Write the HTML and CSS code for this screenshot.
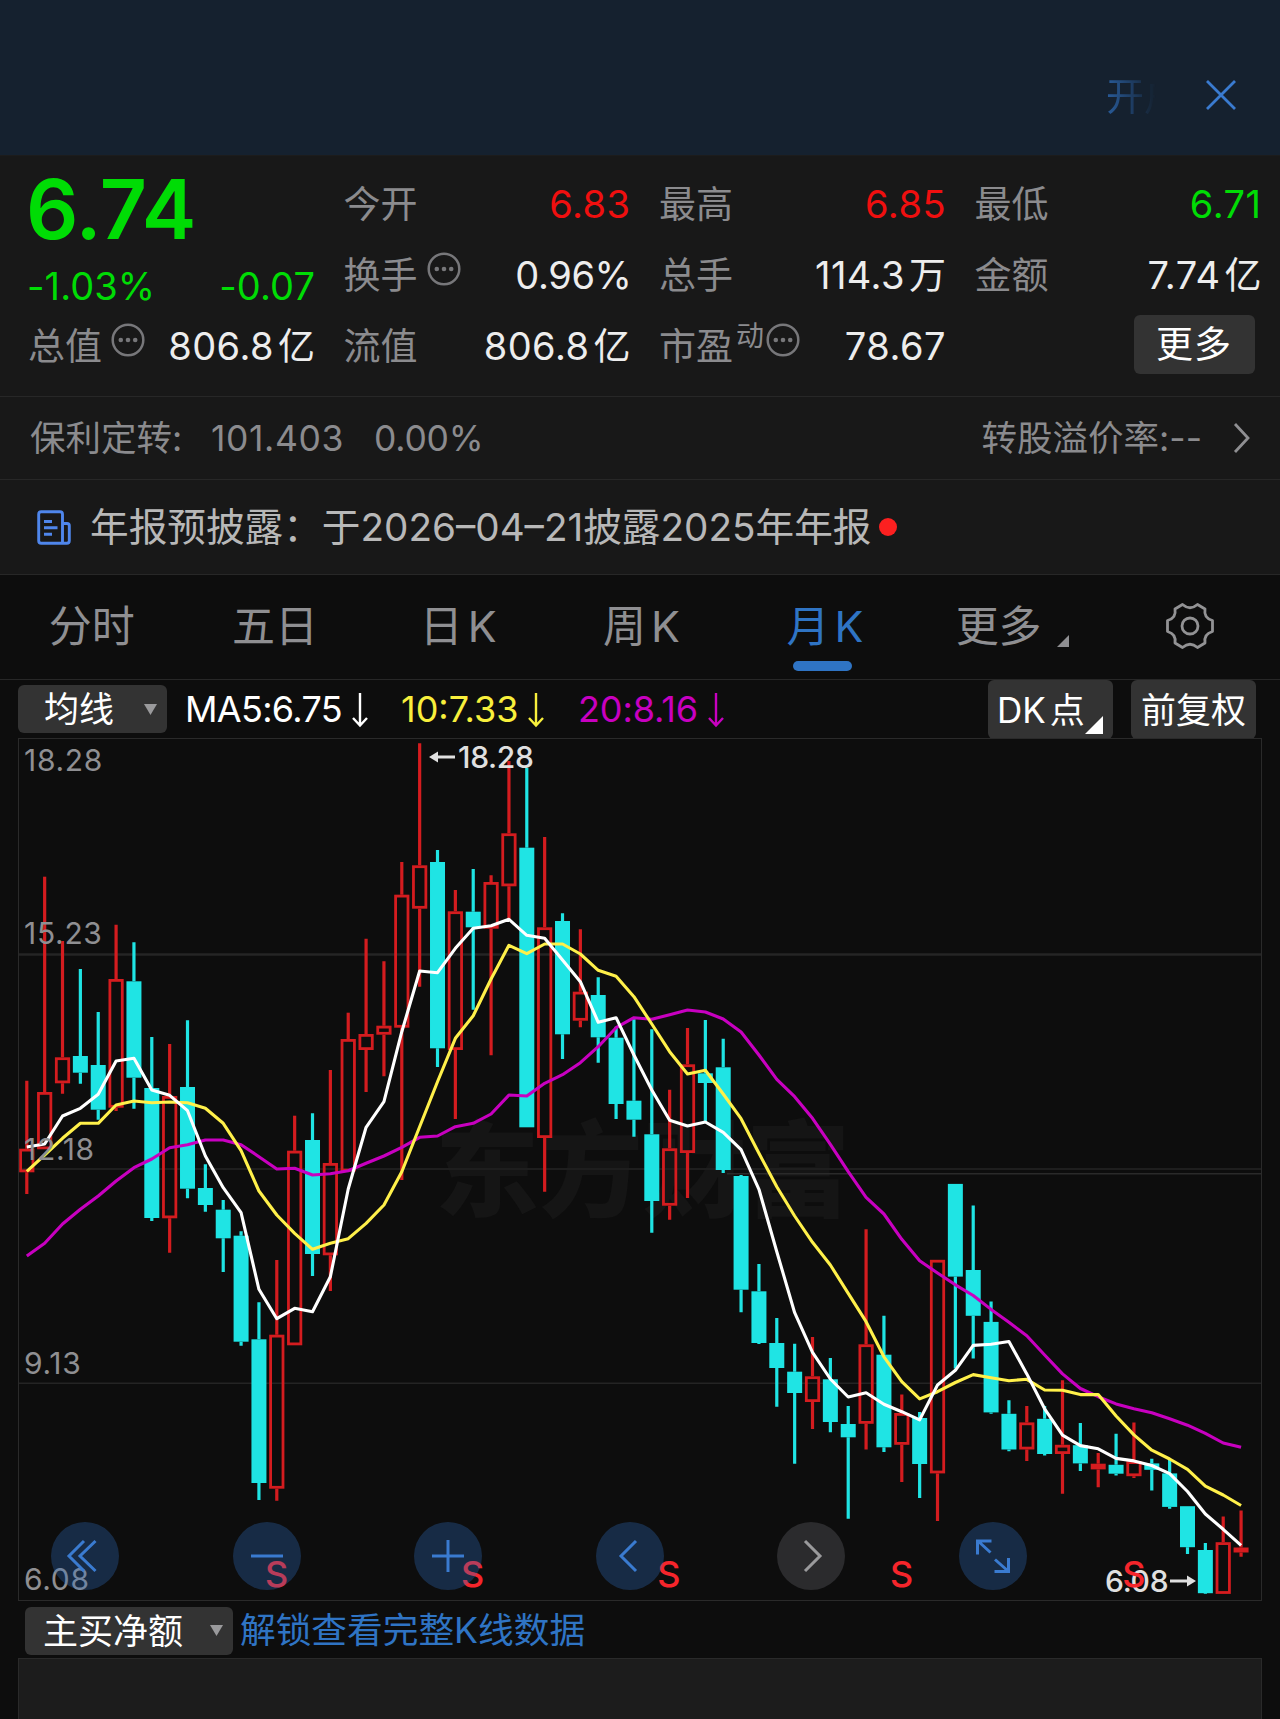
FILE: index.html
```html
<!DOCTYPE html>
<html lang="zh-CN">
<head>
<meta charset="utf-8">
<title>月K</title>
<link rel="stylesheet" href="styles.css">
</head>
<body>
<svg class="defs" width="0" height="0">
  <symbol id="info" viewBox="0 0 34 34"><circle cx="17" cy="17" r="15.3" fill="none" stroke="currentColor" stroke-width="2.5"/><circle cx="9.8" cy="17" r="2.3" fill="currentColor"/><circle cx="17" cy="17" r="2.3" fill="currentColor"/><circle cx="24.2" cy="17" r="2.3" fill="currentColor"/></symbol>
  <symbol id="down" viewBox="0 0 16 36"><path d="M8 1v32M1 26l7 7.5 7-7.5" fill="none" stroke="currentColor" stroke-width="2.4"/></symbol>
</svg>
<header class="banner">
  <div class="marquee">开户</div>
  <svg class="close" width="32" height="32" viewBox="0 0 32 32"><path d="M2 2l28 28M30 2L2 30" stroke="#3a7bd0" stroke-width="2.8" fill="none"/></svg>
</header>

<section class="quote">
  <div class="col col-main">
    <div class="price">6.74</div>
    <div class="row change"><span>-1.03%</span><span>-0.07</span></div>
    <div class="row"><span class="label">总值<svg class="info"><use href="#info"/></svg></span><span class="val">806.8<i>亿</i></span></div>
  </div>
  <div class="col">
    <div class="row"><span class="label">今开</span><span class="val up">6.83</span></div>
    <div class="row"><span class="label">换手<svg class="info"><use href="#info"/></svg></span><span class="val pct">0.96%</span></div>
    <div class="row"><span class="label">流值</span><span class="val">806.8<i>亿</i></span></div>
  </div>
  <div class="col">
    <div class="row"><span class="label">最高</span><span class="val up">6.85</span></div>
    <div class="row"><span class="label">总手</span><span class="val">114.3<i>万</i></span></div>
    <div class="row"><span class="label">市盈<sup>动</sup><svg class="info info-tight"><use href="#info"/></svg></span><span class="val">78.67</span></div>
  </div>
  <div class="col">
    <div class="row"><span class="label">最低</span><span class="val down">6.71</span></div>
    <div class="row"><span class="label">金额</span><span class="val">7.74<i>亿</i></span></div>
    <div class="row row-more"><button class="more">更多</button></div>
  </div>
</section>

<section class="bond">
  <span class="bond-name">保利定转:</span><span class="bond-price">101.403</span><span class="bond-pct">0.00%</span>
  <span class="bond-rate">转股溢价率:--</span>
  <svg width="18" height="32" viewBox="0 0 18 32"><path d="M2 2l13 14L2 30" fill="none" stroke="#8f8f92" stroke-width="2.8"/></svg>
</section>

<section class="notice">
  <svg width="34" height="35" viewBox="0 0 34 35" fill="none" stroke="#4f86ec" stroke-width="2.9"><path d="M25.5 33.3H4.2a2.5 2.5 0 0 1-2.5-2.5V4.2a2.5 2.5 0 0 1 2.5-2.5H23a2.5 2.5 0 0 1 2.5 2.5zM25.500 13.500h4.500a2.300 2.300 0 0 1 2.300 2.300v15a2.500 2.500 0 0 1-2.500 2.500h-4.300M7 11.500h8M7 17.800h13.500M7 24.200h8"/></svg>
  <span class="notice-text">年报预披露：于2026–04–21披露2025年年报</span><b class="dot"></b>
</section>

<nav class="tabs">
  <a>分时</a><a>五日</a><a>日<em>K</em></a><a>周<em>K</em></a><a class="active">月<em>K</em></a><a class="tab-more">更多<svg width="12" height="12"><path d="M12 0v12H0z" fill="#8f8f92"/></svg></a>
  <a class="tab-gear"><svg width="50" height="50" viewBox="-25 -25 50 50" fill="none" stroke="#929294" stroke-width="2.8" stroke-linejoin="round"><circle r="8"/><path d="M-7.500 -21.500Q0 -15 7.500 -21.500L15 -17Q13.500 -8 22.500 -5.500V5.500Q13.500 8 15 17L7.500 21.500Q0 15 -7.500 21.500L-15 17Q-13.500 8 -22.500 5.500V-5.500Q-13.500 -8 -15 -17Z"/></svg></a>
</nav>

<section class="ma">
  <button class="select select-ma"><span>均线</span><svg width="13" height="11"><path d="M0 0h13L6.500 11z" fill="#9a9a9c"/></svg></button>
  <span class="ma5">MA5:6.75<svg class="arr"><use href="#down"/></svg></span>
  <span class="ma10">10:7.33<svg class="arr"><use href="#down"/></svg></span>
  <span class="ma20">20:8.16<svg class="arr"><use href="#down"/></svg></span>
  <button class="opt opt-dk"><span>DK</span><span>点</span><svg width="18" height="18"><path d="M18 0v18H0z" fill="#fff"/></svg></button>
  <button class="opt opt-fq">前复权</button>
</section>

<section class="chart">
  <svg class="kline" id="kline" viewBox="0 738 1280 863" width="1280" height="863">
    <rect x="18.500" y="738.500" width="1243" height="862" fill="none" stroke="#2a2a2a"/>
    <text class="watermark" x="435" y="1209" textLength="415">东方财富</text>
    <path d="M19 954.500H1261" stroke="#252525" stroke-width="2.500"/>
    <path d="M19 1169H1261" stroke="#1e1e1e" stroke-width="2"/>
    <path d="M727 1173.700H1261" stroke="#2a2a2a" stroke-width="1.500"/>
    <path d="M19 1383.300H1261" stroke="#242424" stroke-width="1.500"/>
    <g id="candles"></g>
    <g id="averages" fill="none" stroke-width="3.100" stroke-linejoin="round"></g>
    <g class="axis">
      <text x="24" y="771">18.28</text><text x="24" y="944">15.23</text><text x="24" y="1159.500">12.18</text><text x="24" y="1374">9.13</text><text x="24" y="1589.500">6.08</text>
    </g>
    <g class="extreme">
      <text x="458" y="767.500">18.28</text>
      <text x="1105" y="1592">6.08</text>
      <path d="M436 757H455M1170 1581H1190" stroke="#e0e0e0" stroke-width="2.800"/>
      <path d="M429 757l9-5.500v11zM1196 1581l-9-5.500v11z"/>
    </g>
    <g class="sell"><text x="276.700" y="1586.500">S</text><text x="472.700" y="1586.500">S</text><text x="669" y="1586.500">S</text><text x="901.700" y="1586.500">S</text><text x="1134" y="1586.500">S</text></g>
  </svg>
  <div class="controls">
    <button><svg viewBox="-34 -34 68 68"><path d="M-1 -15L-16 0L-1 15M10.500 -15L-5 0L10.500 15"/></svg></button>
    <button><svg viewBox="-34 -34 68 68"><path d="M-16 0H16"/></svg></button>
    <button><svg viewBox="-34 -34 68 68"><path d="M-16 0H16M0 -16V16"/></svg></button>
    <button><svg viewBox="-34 -34 68 68"><path d="M6 -15L-9 0L6 15"/></svg></button>
    <button class="off"><svg viewBox="-34 -34 68 68"><path d="M-6 -15L9 0L-6 15"/></svg></button>
    <button><svg viewBox="-34 -34 68 68"><path d="M-2.500 -3.500L-15 -15M-15.500 -1.500V-15H-1.500M2 3.500L15 15M15.500 2V15.500H1.500"/></svg></button>
  </div>
</section>

<section class="sub">
  <button class="select select-sub"><span>主买净额</span><svg width="13" height="11"><path d="M0 0h13L6.500 11z" fill="#9a9a9c"/></svg></button>
  <a class="unlock">解锁查看完整K线数据</a>
</section>
<div class="panel"></div>
<script src="chart.js"></script>
</body>
</html>
```
FILE: styles.css
```css
* { box-sizing: border-box; }
body {
  margin: 0; width: 1280px; height: 1719px; overflow: hidden;
  display: flex; flex-direction: column;
  background: #0d0d0d; color: #ededed;
  font-family: Inter, "Noto Sans CJK SC", sans-serif;
  line-height: 1.2;
}
button { border: 0; margin: 0; padding: 0; font: inherit; color: #fff; background: #333; }
i, em { font-style: normal; }
svg { display: block; flex: none; }
.defs { position: absolute; }

.banner {
  flex: none; height: 155px; background: #15212f;
  display: flex; justify-content: flex-end; align-items: flex-start;
  padding: 79px 43px 0 0;
}
.marquee {
  width: 54px; height: 46px; margin: -6px 45px 0 0; overflow: hidden; white-space: nowrap;
  font-size: 38px; line-height: 46px; color: #2c66ad;
  -webkit-mask-image: linear-gradient(90deg, rgba(0,0,0,.85), transparent 92%);
  mask-image: linear-gradient(90deg, rgba(0,0,0,.85), transparent 92%);
}

.quote {
  flex: none; height: 241px; background: #181818; border-top: 1px solid #1c1c1c;
  display: grid; grid-template-columns: repeat(4, 287px); column-gap: 28.500px;
  padding: 13px 0 0 28px;
}
.row { height: 71px; display: flex; justify-content: space-between; align-items: center; font-size: 38px; white-space: nowrap; }
.label { display: flex; align-items: center; color: #8b8b8e; font-size: 37px; padding-top: 2px; }
.val { letter-spacing: .5px; }
.pct { letter-spacing: -.4px; margin-right: -1px; }
.val i { margin-left: 4px; font-size: 37px; letter-spacing: 0; }
.up { color: #f00f0f; }
.down, .price, .change { color: #00dc05; }
.price { height: 86px; margin-left: -2px; font-size: 82px; font-weight: 600; line-height: 81px; letter-spacing: -.3px; }
.change { height: 56px; padding-top: 7px; letter-spacing: .1px; margin-left: -1px; }
.info { width: 34px; height: 34px; margin: -15px 0 0 9px; color: #77777a; }
.info-tight { margin-left: 2px; }
.label sup { font-size: 28px; line-height: 28px; margin: -22px 0 0 3px; }
.row-more { justify-content: flex-end; }
.more { width: 121px; height: 59px; margin: -4px 7px 0 0; padding-top: 2px; border-radius: 6px; font-size: 37px; letter-spacing: 1px; }

.bond {
  flex: none; height: 83px; background: #181818; border-top: 1px solid #272727;
  display: flex; align-items: center; padding: 0 29px 0 30px;
  font-size: 35.500px; color: #8b8b8e;
}
.bond span { padding-top: 2px; }
.bond-name { width: 181px; }
.bond-price { width: 163px; letter-spacing: .6px; }
.bond-pct { letter-spacing: -.2px; }
.bond-rate { margin-left: auto; margin-right: 31px; }

.notice {
  flex: none; height: 95px; background: #181818; border-top: 1px solid #272727;
  display: flex; align-items: center; padding-left: 37px;
  font-size: 38.650px; color: #b8b8b8; white-space: nowrap;
}
.notice-text { margin-left: 19px; }
.dot { width: 18px; height: 18px; margin-left: 8px; border-radius: 50%; background: #fc2020; }

.tabs {
  flex: none; height: 105px; border-top: 1px solid #272727;
  display: grid; grid-template-columns: repeat(7, 183.300px);
  font-size: 43px; line-height: 102px; color: #8f8f92; white-space: nowrap; text-align: center;
}
.tabs a { position: relative; height: 104px; }
.tabs em { margin-left: 5px; }
.active { color: #2f74c4; }
.active::after { content: ""; position: absolute; left: 60px; bottom: 8px; width: 59px; height: 10px; border-radius: 5px; background: #2f74c4; }
.tab-more svg { display: inline-block; margin-left: 15px; vertical-align: -5px; }
.tab-more { left: 4px; }
.tab-gear { display: flex; justify-content: center; padding: 26px 2px 0 0; }

.ma {
  flex: none; height: 59px; border-top: 1px solid #272727;
  display: flex; align-items: center; padding-left: 18px;
  font-size: 36px; white-space: nowrap;
}
.select { display: flex; align-items: center; justify-content: space-between; height: 48px; border-radius: 6px; }
.select-ma { width: 149px; padding: 0 10px 0 26px; font-size: 35px; }
.ma > span { display: flex; align-items: center; padding-top: 1px; }
.arr { width: 16px; height: 36px; margin-left: 10px; }
.ma5 { margin-left: 18px; color: #fff; width: 216px; letter-spacing: -.7px; }
.ma10 { color: #f8ef3c; width: 177px; }
.ma20 { color: #c800c0; letter-spacing: -.1px; }
.opt { height: 59px; border-radius: 6px; display: flex; align-items: center; font-size: 35px; padding-top: 1px; }
.opt-dk { width: 125px; margin-left: auto; padding-left: 9px; gap: 4px; }
.opt-dk svg { align-self: flex-end; margin: 0 0 5px -4px; }
.opt-fq { width: 125px; margin: 0 24px 0 18px; justify-content: center; }

.chart { flex: none; height: 863px; position: relative; }
.watermark { font: 900 104px "Noto Sans CJK SC", sans-serif; fill: #151515; }
.axis { font-size: 30px; fill: #8f8f92; letter-spacing: .7px; }
.extreme { font-size: 30px; font-weight: 500; fill: #e0e0e0; letter-spacing: -.3px; }
.sell { font-size: 36px; font-weight: 500; fill: #f5252b; text-anchor: middle; }
.controls {
  position: absolute; left: 51px; top: 784px; width: 976px;
  display: flex; justify-content: space-between;
}
.controls button { width: 68px; height: 68px; border-radius: 50%; background: rgba(48, 113, 197, .31); }
.controls svg { width: 68px; height: 68px; fill: none; stroke: #3a7bd0; stroke-width: 3; }
.controls .off { background: #2b2b2d; }
.controls .off svg { stroke: #9a9a9c; }

.sub { flex: none; height: 57px; display: flex; align-items: center; padding: 2px 0 0 25px; font-size: 35px; white-space: nowrap; }
.select-sub { width: 208px; padding: 0 10px 0 18px; }
.unlock { margin-left: 7px; color: #2f74c4; font-size: 35.700px; }
.panel { flex: 1; width: 1244px; margin-left: 18px; background: #1c1c1c; border: 1px solid #2a2a2a; border-bottom: 0; }
```
FILE: chart.js
```js
// One candle per month: [type, high, bodyTop, bodyBottom, low]; r = rise, f = fall, s = flat rise
const candles = [
['r',1080.7,1148.7,1172.3,1194],['r',876.7,1092,1149.3,1149.3],['r',941,1057.3,1083.3,1093.7],['f',969,1056,1072.7,1083.7],['f',1012,1065,1109.7,1119.7],
['r',924.7,979,1107.7,1111],['f',942.3,981.3,1077.7,1108.7],['f',1037,1088,1218,1221],['r',1044,1096,1218.3,1252.7],['f',1020.3,1087,1188.7,1198.3],
['f',1164.3,1188,1205,1211.7],['f',1200,1209.7,1238.3,1272],['f',1231.3,1235.7,1341.7,1345.7],['f',1302.3,1339.3,1483,1500],['r',1260,1334.7,1488.7,1500.7],
['r',1115.7,1150.7,1345.3,1345.3],['f',1113.3,1140,1254,1276],['r',1070,1163,1255.3,1291],['r',1012.7,1039,1171.5,1171.5],['r',938.7,1034,1050,1092],
['r',961.3,1025.7,1034.7,1076.3],['r',862,894.7,1027.7,1180],['r',743.3,865.3,908.7,986.7],['f',850,862,1048.3,1067],['r',890,911.3,1050,1119],
['f',869,911.7,927.3,1009.7],['r',875.3,882,928.7,1055.3],['r',761,833.3,886.3,919.3],['f',767.7,847.7,1127.3,1127.3],['r',837,927.3,1138,1191.7],
['f',913.3,921,1034.3,1059],['r',929.3,991.7,1020.7,1027.3],['f',977.3,995,1037.3,1062.7],['f',1026.7,1037.7,1104,1119],['f',1019.3,1100.7,1119.7,1136.7],
['f',1029.3,1134.3,1201,1232.7],['r',1089.7,1148.3,1205.7,1219.7],['r',1028,1064.3,1153,1198],['f',1020,1073.3,1083,1121.7],['f',1038.7,1067.3,1170,1173],
['f',1175,1176,1289.7,1312.3],['f',1264,1291.3,1343,1344],['f',1318,1343,1368,1406.7],['f',1343.7,1371.7,1393,1463.7],['r',1337,1376.3,1402,1429],
['f',1358,1379.3,1422,1432.3],['f',1406,1424,1437.3,1518.7],['r',1229.3,1344.3,1423.8,1449.5],['f',1315.8,1354.7,1447.3,1452],['r',1394.6,1413,1444.8,1482],
['f',1412,1418,1464,1498],['r',1259.8,1259.8,1473.4,1521],['f',1183.9,1183.9,1276.6,1368.6],['f',1205.6,1270,1315.8,1358.6],['f',1301.5,1321.9,1412.4,1413.8],
['f',1400.3,1413.8,1449.5,1451.3],['r',1406,1422.4,1449.5,1461],['f',1406,1418.8,1454,1455.5],['r',1380.3,1444.8,1454,1493.7],['f',1423,1445.2,1463.4,1471],
['s',1453,1463.7,1469.4,1487.3],['f',1433.8,1464.8,1473.7,1475.5],['r',1422.4,1461.2,1476.2,1478],['f',1458.8,1463.4,1469.8,1490.5],['f',1459.5,1473.4,1506.9,1508.7],
['f',1506.2,1506.2,1547.2,1554],['f',1542.9,1550,1593.2,1594],['r',1516.5,1542.2,1593.9,1593.9],['s',1510.4,1547.5,1552.5,1556.8]];

const averages = {
'#c800c0':[1256,1243.3,1224,1209.3,1196,1181,1167.7,1159,1147.7,1144.7,1140,1140,1144.7,1156.7,1169,1168.3,1175,1173.7,1170.7,1163.3,1156,1147.3,1137.3,1136,1126.7,1123.3,1114,1095,1096,1083.3,1074.7,1062.7,1046.7,1027.7,1017.7,1019.3,1014.7,1010,1012,1019,1032,1055,1079.3,1096.7,1118.3,1144.3,1171.7,1197.3,1214,1239.3,1260.7,1273,1284.8,1295.5,1309.4,1322.2,1335.8,1355,1373.9,1388.5,1396.7,1403.9,1408.8,1412.8,1418.8,1425.2,1433.4,1443,1447.3],
'#fff04a':[1171.3,1155,1138.3,1123.3,1123.3,1105,1101,1102.7,1102,1102.7,1108.3,1123.3,1150.7,1191,1215,1233.3,1249.3,1243.3,1238.7,1223.3,1205,1171.7,1126.7,1081.7,1038.3,1015.7,979,945.3,953.7,944,944,954,970.3,976.3,996.7,1024,1051.7,1074,1070.3,1094,1118.7,1153.3,1186.7,1216,1242.3,1265,1293.3,1321.7,1356.8,1381.7,1398.9,1391.7,1382.5,1374.6,1377.8,1380.7,1379.3,1390,1390.3,1394.6,1394.6,1416,1434.9,1450.2,1459,1469.4,1486.2,1495,1505.5],
'#ffffff':[1147,1144,1116,1108.3,1094.3,1061,1058.3,1090,1095.3,1110.7,1156,1187.7,1212.7,1289.3,1318.7,1308.3,1311.7,1276.7,1189,1127.3,1101.7,1031.7,971,972.7,948.3,928.3,925.7,919.3,935.3,938.3,960,981.7,1022.3,1017.7,1055,1090,1120.3,1126,1122,1132.3,1149.7,1189.3,1251.7,1312.7,1352.3,1379,1397,1392.8,1404.2,1411.7,1419.9,1385,1370.3,1345.4,1344.3,1341.5,1373.9,1408.8,1435.2,1445.6,1448.8,1458.4,1460.9,1465.5,1473.7,1491.5,1514,1529.3,1545.4]};

const x = i => 26.8 + i * 17.857;
const CYAN = '#1fe4e4', RED = '#d41c1f';

document.getElementById('candles').innerHTML = candles.map(([t, hi, top, bot, lo], i) => {
  const c = x(i), color = t === 'f' ? CYAN : RED;
  const wick = `<path d="M${c} ${hi}V${top}M${c} ${bot}V${lo}" stroke="${color}" stroke-width="3.200"/>`;
  const body = t === 'r'
    ? `<rect x="${c - 6.2}" y="${top + 1.4}" width="12.400" height="${bot - top - 2.8}" fill="none" stroke="${color}" stroke-width="2.800"/>`
    : `<rect x="${c - 7.5}" y="${top}" width="15" height="${bot - top}" fill="${color}"/>`;
  return wick + body;
}).join('');

document.getElementById('averages').innerHTML = Object.entries(averages).map(([color, ys]) =>
  `<polyline stroke="${color}" points="${ys.map((y, i) => x(i) + ',' + y).join(' ')}"/>`).join('');
```
